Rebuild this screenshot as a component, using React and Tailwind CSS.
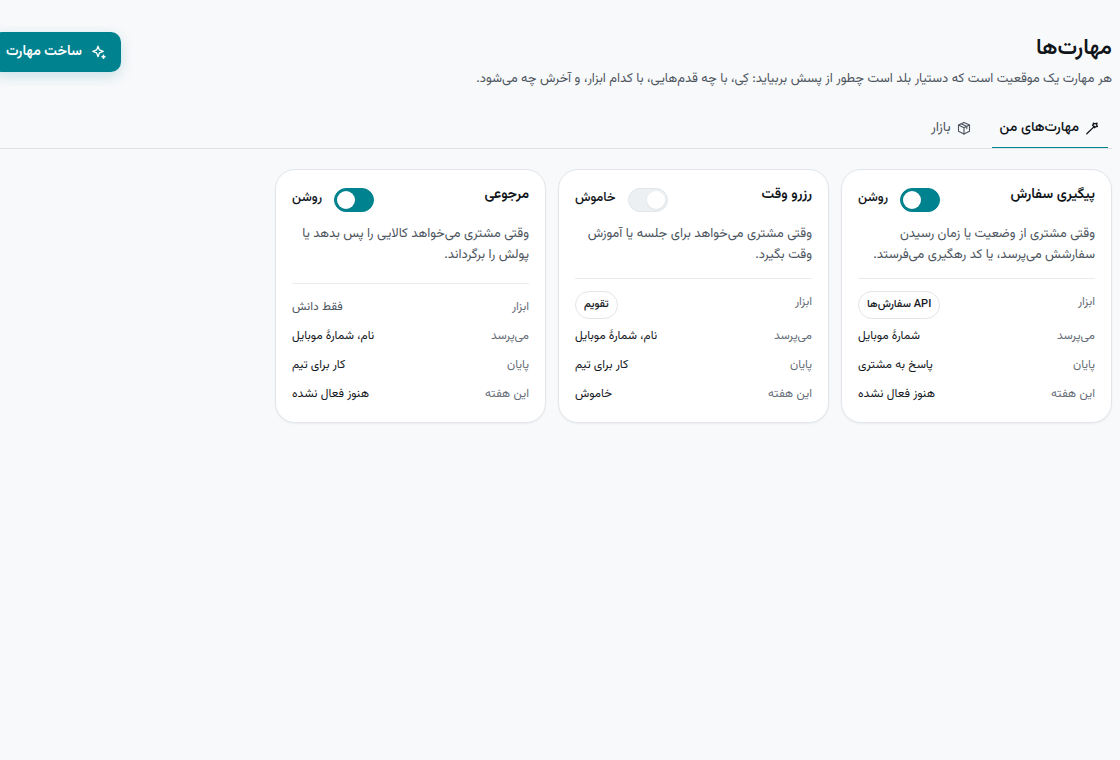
import { useState } from "react";

const skills = [
  {
    title: "پیگیری سفارش",
    on: true,
    text: "وقتی مشتری از وضعیت یا زمان رسیدن سفارشش می‌پرسد، یا کد رهگیری می‌فرستد.",
    tool: "API سفارش‌ها",
    asks: "شمارهٔ موبایل",
    end: "پاسخ به مشتری",
    week: "هنوز فعال نشده",
  },
  {
    title: "رزرو وقت",
    on: false,
    text: "وقتی مشتری می‌خواهد برای جلسه یا آموزش وقت بگیرد.",
    tool: "تقویم",
    asks: "نام، شمارهٔ موبایل",
    end: "کار برای تیم",
    week: "خاموش",
  },
  {
    title: "مرجوعی",
    on: true,
    text: "وقتی مشتری می‌خواهد کالایی را پس بدهد یا پولش را برگرداند.",
    tool: null,
    asks: "نام، شمارهٔ موبایل",
    end: "کار برای تیم",
    week: "هنوز فعال نشده",
  },
];

function SparkleIcon() {
  return (
    <svg viewBox="0 0 16 16" className="size-4 shrink-0" fill="none" stroke="currentColor" strokeWidth="1.3" strokeLinejoin="round" strokeLinecap="round" aria-hidden="true">
      <path d="M7 2.2 8.4 5.9 12.2 7.4 8.4 8.9 7 12.7 5.6 8.9 1.8 7.4 5.6 5.9Z" />
      <path d="M12.5 11.4v2.8M11.1 12.8h2.8" strokeWidth="1.6" />
    </svg>
  );
}

function WandIcon() {
  return (
    <svg viewBox="0 0 16 16" className="size-4 shrink-0" fill="none" stroke="currentColor" strokeWidth="1.3" strokeLinejoin="round" strokeLinecap="round" aria-hidden="true">
      <path d="M2.8 13.7 10.4 6.4" />
      <path d="m9.4 3.2 1.7.6 1.9-.7-.3 1.800.7 1.600-1.700.200-1.300 1-.700-1.500-1.200-.900.900-.900Z" />
    </svg>
  );
}

function BoxIcon() {
  return (
    <svg viewBox="0 0 16 16" className="size-4 shrink-0" fill="none" stroke="currentColor" strokeWidth="1.1" strokeLinejoin="round" strokeLinecap="round" aria-hidden="true">
      <path d="M8 2.400 13.500 5v6.300L8 14.100l-5.500-2.800V5Z" />
      <path d="M2.500 5 8 7.800 13.500 5M8 7.800v6.300M5.200 3.700l5.600 2.700v2.200" />
    </svg>
  );
}

function Row({ label, children }) {
  return (
    <div className="flex items-start justify-between gap-3">
      <dt className="text-[#666e78]">{label}</dt>
      <dd className="text-[#15191e]">{children}</dd>
    </div>
  );
}

function SkillCard({ skill }) {
  const [on, setOn] = useState(skill.on);
  return (
    <article className="flex flex-col rounded-[20px] border border-[#e2e6ea] bg-white p-4 shadow-xs">
      <div className="flex items-start justify-between">
        <h2 className="text-sm leading-[18px] font-semibold">{skill.title}</h2>
        <label className="flex items-start gap-3 text-[13px] leading-6 font-medium">
          <span className="relative mt-0.5 inline-flex">
            <input
              type="checkbox"
              role="switch"
              checked={on}
              onChange={() => setOn(!on)}
              className="peer h-6 w-10 cursor-pointer appearance-none rounded-full border border-[#e2e6ea] bg-[#edf0f3] checked:border-[#00838f] checked:bg-[#00838f]"
            />
            <span className="pointer-events-none absolute top-[3px] right-[3px] size-[18px] rounded-full bg-white shadow-xs peer-checked:right-auto peer-checked:left-[3px]" />
          </span>
          {on ? "روشن" : "خاموش"}
        </label>
      </div>
      <p className="mt-3 mb-3 text-[13px] leading-[21px] text-[#4d555e]">{skill.text}</p>
      <dl className="mt-auto flex flex-col gap-1.5 border-t border-[#e9ecef] pt-3 text-xs leading-[23px]">
        <Row label="ابزار">
          {skill.tool ? (
            <span className="flex h-7 items-center rounded-full border border-[#e2e6ea] px-2 pb-0.5 text-[11px] font-medium">{skill.tool}</span>
          ) : (
            <span className="text-[#4d555e]">فقط دانش</span>
          )}
        </Row>
        <Row label="می‌پرسد">{skill.asks}</Row>
        <Row label="پایان">{skill.end}</Row>
        <Row label="این هفته">{skill.week}</Row>
      </dl>
    </article>
  );
}

export default function App() {
  return (
    <div dir="rtl" className="min-h-screen overflow-x-hidden bg-[#f8f9fb] pr-2 font-[Vazirmatn,Inter,'DejaVu_Sans',sans-serif] text-[#0f1419]">
      <main className="-ml-2 pt-8">
        <header className="flex items-start justify-between">
          <div>
            <h1 className="text-[22px] leading-[33px] font-semibold">مهارت‌ها</h1>
            <p className="mt-1 text-[13px] leading-5 text-[#4d555e]">
              هر مهارت یک موقعیت است که دستیار بلد است چطور از پسش بربیاید: کِی، با چه قدم‌هایی، با کدام ابزار، و آخرش چه می‌شود.
            </p>
          </div>
          <button type="button" className="flex h-10 items-center gap-[9px] rounded-[10px] bg-[#00838f] px-3.5 text-sm font-semibold text-white shadow-[0_4px_14px_rgba(0,131,143,0.2)]">
            <SparkleIcon />
            ساخت مهارت
          </button>
        </header>
        <nav className="mt-5 flex gap-3 border-b border-[#dfe3e7] pr-1 text-sm leading-[22px]">
          <a href="#mine" className="flex items-center gap-[5px] border-b border-[#00838f] px-2 py-2 font-medium">
            <WandIcon />
            مهارت‌های من
          </a>
          <a href="#market" className="flex items-center gap-[5px] border-b border-transparent px-2 py-2 text-[#4d555e]">
            <BoxIcon />
            بازار
          </a>
        </nav>
        <section className="mt-5 grid grid-cols-4 gap-3">
          {skills.map((skill) => (
            <SkillCard key={skill.title} skill={skill} />
          ))}
        </section>
      </main>
    </div>
  );
}
